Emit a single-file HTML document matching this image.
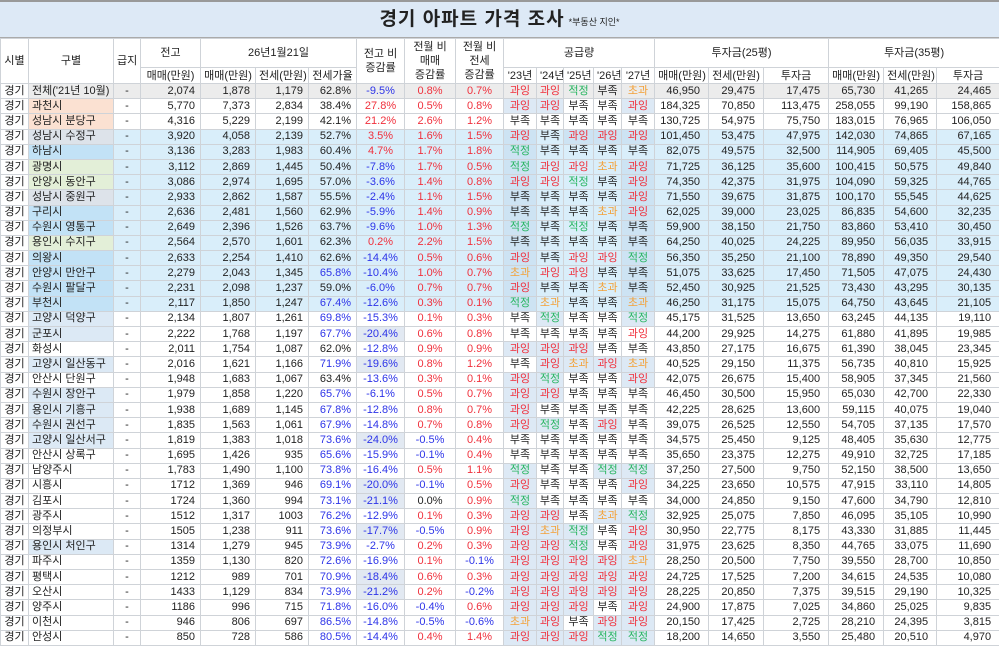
<!DOCTYPE html>
<html><head><meta charset="utf-8"><style>
*{margin:0;padding:0;box-sizing:border-box}
body{width:999px;height:646px;overflow:hidden;background:#fff;font-family:"Liberation Sans","Noto Sans CJK KR","NanumGothic",sans-serif;font-size:11px;color:#222}
.title{position:absolute;left:0;top:0;width:999px;height:38px;background:#dde9f6;border-top:2px solid #999;border-bottom:1px solid #aaa;text-align:center;line-height:36px}
.title b{font-size:19px;letter-spacing:1px}
.title small{font-size:9px;margin-left:4px}
table{position:absolute;left:0;top:38px;border-collapse:collapse;table-layout:fixed;width:999px}
td{border:1px solid #cfd3d8;white-space:nowrap;overflow:hidden;height:15.2px;line-height:13px;padding:0 3px}
thead td{text-align:center;background:#fff;line-height:14px}
tr.h1 td{height:29px}
tr.h2 td{height:16px}
tbody td{text-align:right}
tbody td:nth-child(n+4):nth-child(-n+7){padding-right:5px}
tbody td:nth-child(1),tbody td:nth-child(3){text-align:center}
tbody td:nth-child(2){text-align:left}
tbody td:nth-child(n+11):nth-child(-n+15){text-align:center;padding:0}
tbody td:nth-child(n+8):nth-child(-n+10){text-align:center}
tbody td:nth-child(n+16){padding-right:8px}
tbody td:first-child{background:#fff}
.r{color:#f0303c}.b{color:#2d34e8}.g{color:#27b560}.o{color:#f3a23a}
.s{background:#dde9f5}
.x{background:#e2e9f2}
.gr td{background:#ececec}
.bl td{background:#d9eefa}
.bl td.s{background:#cde3f3}
.pe{background:#fbe1d2}
.nb{background:#c2e2f6!important}
.ng{background:#e3efd8!important}
.ny{background:#dde3ea!important}
.nl{background:#dce9f5}
</style></head><body>
<div class="title"><b>경기 아파트 가격 조사</b><small>*부동산 지인*</small></div>
<table>
<colgroup>
<col style="width:28px"><col style="width:85px"><col style="width:27px"><col style="width:60px"><col style="width:55px"><col style="width:53px"><col style="width:48px"><col style="width:48px"><col style="width:51px"><col style="width:48px"><col style="width:33px"><col style="width:27px"><col style="width:30px"><col style="width:28px"><col style="width:33px"><col style="width:54px"><col style="width:55px"><col style="width:65px"><col style="width:55px"><col style="width:53px"><col style="width:63px">
</colgroup>
<thead>
<tr class="h1"><td rowspan="2">시별</td><td rowspan="2">구별</td><td rowspan="2">급지</td><td>전고</td><td colspan="3">26년1월21일</td><td rowspan="2">전고 비<br>증감률</td><td rowspan="2">전월 비<br>매매<br>증감률</td><td rowspan="2">전월 비<br>전세<br>증감률</td><td colspan="5">공급량</td><td colspan="3">투자금(25평)</td><td colspan="3">투자금(35평)</td></tr>
<tr class="h2"><td>매매(만원)</td><td>매매(만원)</td><td>전세(만원)</td><td>전세가율</td><td>'23년</td><td>'24년</td><td>'25년</td><td>'26년</td><td>'27년</td><td>매매(만원)</td><td>전세(만원)</td><td>투자금</td><td>매매(만원)</td><td>전세(만원)</td><td>투자금</td></tr>
</thead>
<tbody>
<tr class="gr"><td>경기</td><td>전체('21년 10월)</td><td>-</td><td>2,074</td><td>1,878</td><td>1,179</td><td>62.8%</td><td class="b">-9.5%</td><td class="r">0.8%</td><td class="r">0.7%</td><td class="r">과잉</td><td class="r">과잉</td><td class="g">적정</td><td>부족</td><td class="o">초과</td><td>46,950</td><td>29,475</td><td>17,475</td><td>65,730</td><td>41,265</td><td>24,465</td></tr>
<tr><td>경기</td><td class="pe">과천시</td><td>-</td><td>5,770</td><td>7,373</td><td>2,834</td><td>38.4%</td><td class="r">27.8%</td><td class="r">0.5%</td><td class="r">0.8%</td><td class="r s">과잉</td><td class="r s">과잉</td><td>부족</td><td>부족</td><td class="r s">과잉</td><td>184,325</td><td>70,850</td><td>113,475</td><td>258,055</td><td>99,190</td><td>158,865</td></tr>
<tr><td>경기</td><td class="pe">성남시 분당구</td><td>-</td><td>4,316</td><td>5,229</td><td>2,199</td><td>42.1%</td><td class="r">21.2%</td><td class="r">2.6%</td><td class="r">1.2%</td><td>부족</td><td>부족</td><td>부족</td><td>부족</td><td>부족</td><td>130,725</td><td>54,975</td><td>75,750</td><td>183,015</td><td>76,965</td><td>106,050</td></tr>
<tr class="bl"><td>경기</td><td class="ny">성남시 수정구</td><td>-</td><td>3,920</td><td>4,058</td><td>2,139</td><td>52.7%</td><td class="r">3.5%</td><td class="r">1.6%</td><td class="r">1.5%</td><td class="r s">과잉</td><td>부족</td><td class="r s">과잉</td><td class="r s">과잉</td><td class="r s">과잉</td><td>101,450</td><td>53,475</td><td>47,975</td><td>142,030</td><td>74,865</td><td>67,165</td></tr>
<tr class="bl"><td>경기</td><td class="nb">하남시</td><td>-</td><td>3,136</td><td>3,283</td><td>1,983</td><td>60.4%</td><td class="r">4.7%</td><td class="r">1.7%</td><td class="r">1.8%</td><td class="g s">적정</td><td>부족</td><td>부족</td><td>부족</td><td>부족</td><td>82,075</td><td>49,575</td><td>32,500</td><td>114,905</td><td>69,405</td><td>45,500</td></tr>
<tr class="bl"><td>경기</td><td class="ng">광명시</td><td>-</td><td>3,112</td><td>2,869</td><td>1,445</td><td>50.4%</td><td class="b">-7.8%</td><td class="r">1.7%</td><td class="r">0.5%</td><td class="g s">적정</td><td class="r">과잉</td><td class="r">과잉</td><td class="o">초과</td><td class="r s">과잉</td><td>71,725</td><td>36,125</td><td>35,600</td><td>100,415</td><td>50,575</td><td>49,840</td></tr>
<tr class="bl"><td>경기</td><td class="ng">안양시 동안구</td><td>-</td><td>3,086</td><td>2,974</td><td>1,695</td><td>57.0%</td><td class="b">-3.6%</td><td class="r">1.4%</td><td class="r">0.8%</td><td class="r s">과잉</td><td class="r">과잉</td><td class="g">적정</td><td>부족</td><td class="r s">과잉</td><td>74,350</td><td>42,375</td><td>31,975</td><td>104,090</td><td>59,325</td><td>44,765</td></tr>
<tr class="bl"><td>경기</td><td class="ny">성남시 중원구</td><td>-</td><td>2,933</td><td>2,862</td><td>1,587</td><td>55.5%</td><td class="b">-2.4%</td><td class="r">1.1%</td><td class="r">1.5%</td><td class="s">부족</td><td>부족</td><td>부족</td><td>부족</td><td class="r s">과잉</td><td>71,550</td><td>39,675</td><td>31,875</td><td>100,170</td><td>55,545</td><td>44,625</td></tr>
<tr class="bl"><td>경기</td><td class="nb">구리시</td><td>-</td><td>2,636</td><td>2,481</td><td>1,560</td><td>62.9%</td><td class="b">-5.9%</td><td class="r">1.4%</td><td class="r">0.9%</td><td class="s">부족</td><td>부족</td><td>부족</td><td class="o">초과</td><td class="r s">과잉</td><td>62,025</td><td>39,000</td><td>23,025</td><td>86,835</td><td>54,600</td><td>32,235</td></tr>
<tr class="bl"><td>경기</td><td class="nb">수원시 영통구</td><td>-</td><td>2,649</td><td>2,396</td><td>1,526</td><td>63.7%</td><td class="b">-9.6%</td><td class="r">1.0%</td><td class="r">1.3%</td><td class="g s">적정</td><td>부족</td><td class="g">적정</td><td>부족</td><td class="s">부족</td><td>59,900</td><td>38,150</td><td>21,750</td><td>83,860</td><td>53,410</td><td>30,450</td></tr>
<tr class="bl"><td>경기</td><td class="ng">용인시 수지구</td><td>-</td><td>2,564</td><td>2,570</td><td>1,601</td><td>62.3%</td><td class="r">0.2%</td><td class="r">2.2%</td><td class="r">1.5%</td><td class="s">부족</td><td>부족</td><td>부족</td><td>부족</td><td class="s">부족</td><td>64,250</td><td>40,025</td><td>24,225</td><td>89,950</td><td>56,035</td><td>33,915</td></tr>
<tr class="bl"><td>경기</td><td class="nb">의왕시</td><td>-</td><td>2,633</td><td>2,254</td><td>1,410</td><td>62.6%</td><td class="b">-14.4%</td><td class="r">0.5%</td><td class="r">0.6%</td><td class="r s">과잉</td><td>부족</td><td class="r">과잉</td><td class="r">과잉</td><td class="g s">적정</td><td>56,350</td><td>35,250</td><td>21,100</td><td>78,890</td><td>49,350</td><td>29,540</td></tr>
<tr class="bl"><td>경기</td><td class="nb">안양시 만안구</td><td>-</td><td>2,279</td><td>2,043</td><td>1,345</td><td class="b">65.8%</td><td class="b">-10.4%</td><td class="r">1.0%</td><td class="r">0.7%</td><td class="o s">초과</td><td class="r">과잉</td><td class="r">과잉</td><td>부족</td><td class="s">부족</td><td>51,075</td><td>33,625</td><td>17,450</td><td>71,505</td><td>47,075</td><td>24,430</td></tr>
<tr class="bl"><td>경기</td><td class="nb">수원시 팔달구</td><td>-</td><td>2,231</td><td>2,098</td><td>1,237</td><td>59.0%</td><td class="b">-6.0%</td><td class="r">0.7%</td><td class="r">0.7%</td><td class="r s">과잉</td><td>부족</td><td>부족</td><td class="o">초과</td><td class="s">부족</td><td>52,450</td><td>30,925</td><td>21,525</td><td>73,430</td><td>43,295</td><td>30,135</td></tr>
<tr class="bl"><td>경기</td><td class="nb">부천시</td><td>-</td><td>2,117</td><td>1,850</td><td>1,247</td><td class="b">67.4%</td><td class="b">-12.6%</td><td class="r">0.3%</td><td class="r">0.1%</td><td class="g s">적정</td><td class="o">초과</td><td>부족</td><td>부족</td><td class="o s">초과</td><td>46,250</td><td>31,175</td><td>15,075</td><td>64,750</td><td>43,645</td><td>21,105</td></tr>
<tr><td>경기</td><td class="nl">고양시 덕양구</td><td>-</td><td>2,134</td><td>1,807</td><td>1,261</td><td class="b">69.8%</td><td class="b">-15.3%</td><td class="r">0.1%</td><td class="r">0.3%</td><td>부족</td><td class="g s">적정</td><td>부족</td><td>부족</td><td class="g s">적정</td><td>45,175</td><td>31,525</td><td>13,650</td><td>63,245</td><td>44,135</td><td>19,110</td></tr>
<tr><td>경기</td><td class="nl">군포시</td><td>-</td><td>2,222</td><td>1,768</td><td>1,197</td><td class="b">67.7%</td><td class="b x">-20.4%</td><td class="r">0.6%</td><td class="r">0.8%</td><td>부족</td><td>부족</td><td>부족</td><td>부족</td><td class="r">과잉</td><td>44,200</td><td>29,925</td><td>14,275</td><td>61,880</td><td>41,895</td><td>19,985</td></tr>
<tr><td>경기</td><td>화성시</td><td>-</td><td>2,011</td><td>1,754</td><td>1,087</td><td>62.0%</td><td class="b">-12.8%</td><td class="r">0.9%</td><td class="r">0.9%</td><td class="r s">과잉</td><td class="r s">과잉</td><td class="r s">과잉</td><td>부족</td><td>부족</td><td>43,850</td><td>27,175</td><td>16,675</td><td>61,390</td><td>38,045</td><td>23,345</td></tr>
<tr><td>경기</td><td class="nl">고양시 일산동구</td><td>-</td><td>2,016</td><td>1,621</td><td>1,166</td><td class="b">71.9%</td><td class="b x">-19.6%</td><td class="r">0.8%</td><td class="r">1.2%</td><td>부족</td><td class="r s">과잉</td><td class="o s">초과</td><td class="r s">과잉</td><td class="o s">초과</td><td>40,525</td><td>29,150</td><td>11,375</td><td>56,735</td><td>40,810</td><td>15,925</td></tr>
<tr><td>경기</td><td>안산시 단원구</td><td>-</td><td>1,948</td><td>1,683</td><td>1,067</td><td>63.4%</td><td class="b">-13.6%</td><td class="r">0.3%</td><td class="r">0.1%</td><td class="r s">과잉</td><td class="g s">적정</td><td>부족</td><td>부족</td><td class="r s">과잉</td><td>42,075</td><td>26,675</td><td>15,400</td><td>58,905</td><td>37,345</td><td>21,560</td></tr>
<tr><td>경기</td><td class="nl">수원시 장안구</td><td>-</td><td>1,979</td><td>1,858</td><td>1,220</td><td class="b">65.7%</td><td class="b">-6.1%</td><td class="r">0.5%</td><td class="r">0.7%</td><td class="r s">과잉</td><td class="r s">과잉</td><td>부족</td><td>부족</td><td>부족</td><td>46,450</td><td>30,500</td><td>15,950</td><td>65,030</td><td>42,700</td><td>22,330</td></tr>
<tr><td>경기</td><td class="nl">용인시 기흥구</td><td>-</td><td>1,938</td><td>1,689</td><td>1,145</td><td class="b">67.8%</td><td class="b">-12.8%</td><td class="r">0.8%</td><td class="r">0.7%</td><td class="r s">과잉</td><td>부족</td><td>부족</td><td>부족</td><td>부족</td><td>42,225</td><td>28,625</td><td>13,600</td><td>59,115</td><td>40,075</td><td>19,040</td></tr>
<tr><td>경기</td><td class="nl">수원시 권선구</td><td>-</td><td>1,835</td><td>1,563</td><td>1,061</td><td class="b">67.9%</td><td class="b">-14.8%</td><td class="r">0.7%</td><td class="r">0.8%</td><td class="r s">과잉</td><td class="g s">적정</td><td>부족</td><td class="r s">과잉</td><td>부족</td><td>39,075</td><td>26,525</td><td>12,550</td><td>54,705</td><td>37,135</td><td>17,570</td></tr>
<tr><td>경기</td><td class="nl">고양시 일산서구</td><td>-</td><td>1,819</td><td>1,383</td><td>1,018</td><td class="b">73.6%</td><td class="b x">-24.0%</td><td class="b">-0.5%</td><td class="r">0.4%</td><td>부족</td><td>부족</td><td>부족</td><td>부족</td><td>부족</td><td>34,575</td><td>25,450</td><td>9,125</td><td>48,405</td><td>35,630</td><td>12,775</td></tr>
<tr><td>경기</td><td>안산시 상록구</td><td>-</td><td>1,695</td><td>1,426</td><td>935</td><td class="b">65.6%</td><td class="b">-15.9%</td><td class="b">-0.1%</td><td class="r">0.4%</td><td>부족</td><td>부족</td><td>부족</td><td>부족</td><td>부족</td><td>35,650</td><td>23,375</td><td>12,275</td><td>49,910</td><td>32,725</td><td>17,185</td></tr>
<tr><td>경기</td><td>남양주시</td><td>-</td><td>1,783</td><td>1,490</td><td>1,100</td><td class="b">73.8%</td><td class="b">-16.4%</td><td class="r">0.5%</td><td class="r">1.1%</td><td class="g s">적정</td><td>부족</td><td>부족</td><td class="g s">적정</td><td class="g s">적정</td><td>37,250</td><td>27,500</td><td>9,750</td><td>52,150</td><td>38,500</td><td>13,650</td></tr>
<tr><td>경기</td><td>시흥시</td><td>-</td><td>1712</td><td>1,369</td><td>946</td><td class="b">69.1%</td><td class="b x">-20.0%</td><td class="b">-0.1%</td><td class="r">0.5%</td><td class="r s">과잉</td><td>부족</td><td>부족</td><td>부족</td><td class="r s">과잉</td><td>34,225</td><td>23,650</td><td>10,575</td><td>47,915</td><td>33,110</td><td>14,805</td></tr>
<tr><td>경기</td><td>김포시</td><td>-</td><td>1724</td><td>1,360</td><td>994</td><td class="b">73.1%</td><td class="b x">-21.1%</td><td>0.0%</td><td class="r">0.9%</td><td class="g s">적정</td><td>부족</td><td>부족</td><td>부족</td><td>부족</td><td>34,000</td><td>24,850</td><td>9,150</td><td>47,600</td><td>34,790</td><td>12,810</td></tr>
<tr><td>경기</td><td>광주시</td><td>-</td><td>1512</td><td>1,317</td><td>1003</td><td class="b">76.2%</td><td class="b">-12.9%</td><td class="r">0.1%</td><td class="r">0.3%</td><td class="r s">과잉</td><td class="r s">과잉</td><td>부족</td><td class="o s">초과</td><td class="g s">적정</td><td>32,925</td><td>25,075</td><td>7,850</td><td>46,095</td><td>35,105</td><td>10,990</td></tr>
<tr><td>경기</td><td>의정부시</td><td>-</td><td>1505</td><td>1,238</td><td>911</td><td class="b">73.6%</td><td class="b x">-17.7%</td><td class="b">-0.5%</td><td class="r">0.9%</td><td class="r s">과잉</td><td class="o s">초과</td><td class="g s">적정</td><td>부족</td><td class="r s">과잉</td><td>30,950</td><td>22,775</td><td>8,175</td><td>43,330</td><td>31,885</td><td>11,445</td></tr>
<tr><td>경기</td><td class="nl">용인시 처인구</td><td>-</td><td>1314</td><td>1,279</td><td>945</td><td class="b">73.9%</td><td class="b">-2.7%</td><td class="r">0.2%</td><td class="r">0.3%</td><td class="r s">과잉</td><td class="r s">과잉</td><td class="g s">적정</td><td>부족</td><td class="r s">과잉</td><td>31,975</td><td>23,625</td><td>8,350</td><td>44,765</td><td>33,075</td><td>11,690</td></tr>
<tr><td>경기</td><td>파주시</td><td>-</td><td>1359</td><td>1,130</td><td>820</td><td class="b">72.6%</td><td class="b">-16.9%</td><td class="r">0.1%</td><td class="b">-0.1%</td><td class="r s">과잉</td><td class="r s">과잉</td><td class="r s">과잉</td><td class="r s">과잉</td><td class="o s">초과</td><td>28,250</td><td>20,500</td><td>7,750</td><td>39,550</td><td>28,700</td><td>10,850</td></tr>
<tr><td>경기</td><td>평택시</td><td>-</td><td>1212</td><td>989</td><td>701</td><td class="b">70.9%</td><td class="b x">-18.4%</td><td class="r">0.6%</td><td class="r">0.3%</td><td class="r s">과잉</td><td class="r s">과잉</td><td class="r s">과잉</td><td class="r s">과잉</td><td class="r s">과잉</td><td>24,725</td><td>17,525</td><td>7,200</td><td>34,615</td><td>24,535</td><td>10,080</td></tr>
<tr><td>경기</td><td>오산시</td><td>-</td><td>1433</td><td>1,129</td><td>834</td><td class="b">73.9%</td><td class="b x">-21.2%</td><td class="r">0.2%</td><td class="b">-0.2%</td><td class="r s">과잉</td><td class="r s">과잉</td><td class="r s">과잉</td><td class="r s">과잉</td><td class="r s">과잉</td><td>28,225</td><td>20,850</td><td>7,375</td><td>39,515</td><td>29,190</td><td>10,325</td></tr>
<tr><td>경기</td><td>양주시</td><td>-</td><td>1186</td><td>996</td><td>715</td><td class="b">71.8%</td><td class="b">-16.0%</td><td class="b">-0.4%</td><td class="r">0.6%</td><td class="r s">과잉</td><td class="r s">과잉</td><td class="r s">과잉</td><td>부족</td><td class="r s">과잉</td><td>24,900</td><td>17,875</td><td>7,025</td><td>34,860</td><td>25,025</td><td>9,835</td></tr>
<tr><td>경기</td><td>이천시</td><td>-</td><td>946</td><td>806</td><td>697</td><td class="b">86.5%</td><td class="b">-14.8%</td><td class="b">-0.5%</td><td class="b">-0.6%</td><td class="o s">초과</td><td class="r s">과잉</td><td>부족</td><td class="r s">과잉</td><td class="r s">과잉</td><td>20,150</td><td>17,425</td><td>2,725</td><td>28,210</td><td>24,395</td><td>3,815</td></tr>
<tr><td>경기</td><td>안성시</td><td>-</td><td>850</td><td>728</td><td>586</td><td class="b">80.5%</td><td class="b">-14.4%</td><td class="r">0.4%</td><td class="r">1.4%</td><td class="r s">과잉</td><td class="r s">과잉</td><td class="r s">과잉</td><td class="g s">적정</td><td class="g s">적정</td><td>18,200</td><td>14,650</td><td>3,550</td><td>25,480</td><td>20,510</td><td>4,970</td></tr>
</tbody>
</table>
</body></html>
